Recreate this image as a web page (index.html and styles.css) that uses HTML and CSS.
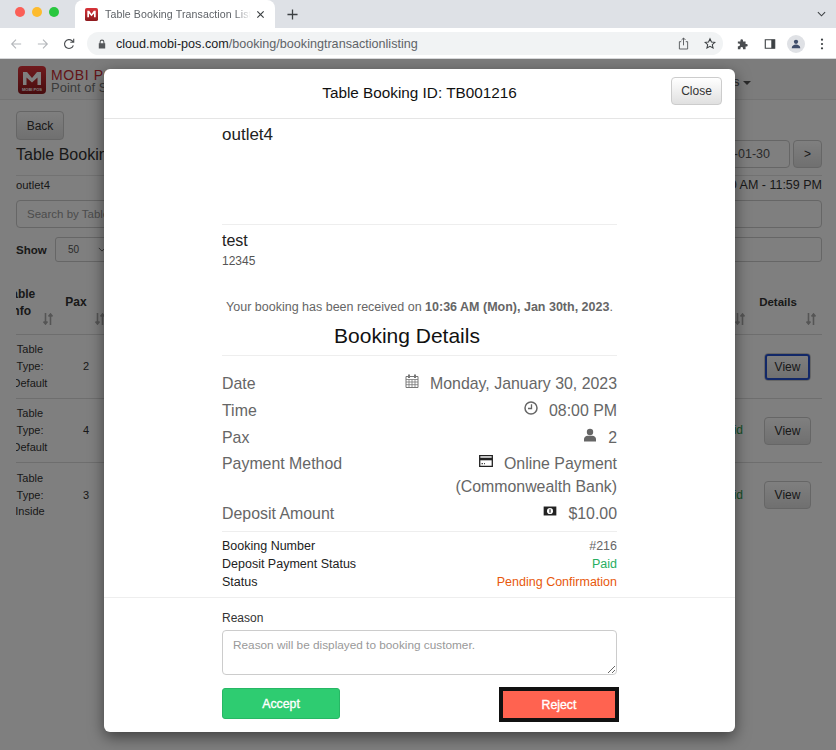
FILE: index.html
```html
<!DOCTYPE html>
<html lang="en">
<head>
<meta charset="utf-8">
<title>Table Booking Transaction Listing</title>
<link rel="stylesheet" href="styles.css">
</head>
<body>
<div class="tabstrip">
  <div class="lights"><i class="red"></i><i class="yellow"></i><i class="green"></i></div>
  <div class="tab">
    <svg class="favicon" viewBox="0 0 14 14"><defs><linearGradient id="fav" x1="0" y1="0" x2="0" y2="1"><stop offset="0" stop-color="#d8343a"/><stop offset="1" stop-color="#8d1a1e"/></linearGradient></defs><rect width="14" height="14" rx="2" fill="url(#fav)"/><path d="M2.500 10V3h2L7 6.500 9.500 3h2v7H9.700V6L7 9 4.300 6v4z" fill="#fff"/></svg>
    <span class="tabtitle">Table Booking Transaction Listi</span>
    <svg class="tabx" viewBox="0 0 10 10"><path d="M1.500 1.500l7 7M8.500 1.500l-7 7" stroke="#3c4043" stroke-width="1.300" fill="none"/></svg>
  </div>
  <svg class="plus" viewBox="0 0 12 12"><path d="M6 .5v11M.5 6h11" stroke="#3c4043" stroke-width="1.400" fill="none"/></svg>
  <svg class="chev" viewBox="0 0 10 6"><path d="M1 1l4 4 4-4" stroke="#3c4043" stroke-width="1.200" fill="none"/></svg>
</div>
<div class="toolbar">
  <div class="navs">
    <svg class="navicon" viewBox="0 0 14 14"><path d="M13 7H2M7 2L2 7l5 5" stroke="#b4b7bb" stroke-width="1.300" fill="none"/></svg>
    <svg class="navicon" viewBox="0 0 14 14"><path d="M1 7h11M7 2l5 5-5 5" stroke="#b4b7bb" stroke-width="1.300" fill="none"/></svg>
    <svg class="navicon" viewBox="0 0 14 14"><path d="M12 8.500A5.200 5.200 0 1 1 10.500 3.200L12.500 5M12.500 1V5H8.500" stroke="#4a4d50" stroke-width="1.300" fill="none"/></svg>
  </div>
  <div class="omnibox">
    <svg class="lock" viewBox="0 0 10 12"><path d="M2 5V3.500a3 3 0 0 1 6 0V5h1v6.500H1V5zm1.300 0h3.400V3.500a1.700 1.700 0 0 0-3.400 0z" fill="#55585b"/></svg>
    <span class="url"><b>cloud.mobi-pos.com</b>/booking/bookingtransactionlisting</span>
    <svg class="omniicon" viewBox="0 0 12 14"><path d="M3.500 5H1.500v8h9V5H8.500M6 9V1M3.800 3.200L6 1l2.200 2.200" stroke="#55585b" fill="none"/></svg>
    <svg class="omniicon star" viewBox="0 0 14 14"><path d="M7 1.500l1.700 3.700 4 .4-3 2.700.9 4L7 10.300l-3.600 2 .9-4-3-2.700 4-.4z" stroke="#3c4043" stroke-width="1.200" fill="none"/></svg>
  </div>
  <svg class="tool puzzle" viewBox="0 0 14 14"><path d="M1 4h3V3a1.500 1.500 0 0 1 3 0v1h3v3h1a1.500 1.500 0 0 1 0 3h-1v3H7v-1a1.500 1.500 0 0 0-3 0v1H1v-3.500h1a1.500 1.500 0 0 0 0-3H1z" fill="#4a4d50"/></svg>
  <svg class="tool panel" viewBox="0 0 14 14"><path d="M1.500 2h11v10h-11z" fill="none" stroke="#3c4043" stroke-width="1.300"/><path d="M8.500 2h4v10h-4z" fill="#3c4043"/></svg>
  <div class="avatar"><svg viewBox="0 0 14 14"><circle cx="7" cy="4.500" r="2.500" fill="#3f4d6b"/><path d="M2 12c0-3 2.500-4.300 5-4.300s5 1.300 5 4.300z" fill="#3f4d6b"/></svg></div>
  <svg class="dots" viewBox="0 0 4 14"><circle cx="2" cy="2" r="1.300" fill="#3c4043"/><circle cx="2" cy="7" r="1.300" fill="#3c4043"/><circle cx="2" cy="12" r="1.300" fill="#3c4043"/></svg>
</div>

<div class="viewport">
  <div class="page">
    <header class="sitebar">
      <svg class="sitelogo" viewBox="0 0 28 28"><defs><linearGradient id="logo" x1="0" y1="0" x2="0" y2="1"><stop offset="0" stop-color="#e0343a"/><stop offset="1" stop-color="#8f1a1e"/></linearGradient></defs><rect width="28" height="28" rx="4" fill="url(#logo)"/><path d="M5 19V6h4l5 6 5-6h4v13h-3.500v-7.500L14 16.500 8.500 11.500V19z" fill="#fff"/><text class="logotext" x="14" y="24.500" text-anchor="middle">MOBI POS</text></svg>
      <div class="brand"><div class="brand1">MOBI POS</div><div class="brand2">Point of Sale</div></div>
      <div class="sitemenu">Bookings <span class="caret"></span></div>
    </header>
    <main class="content">
      <button class="btn backbtn">Back</button>
      <div class="titlerow">
        <h2 class="pagetitle">Table Booking</h2>
        <div class="daterow"><span class="datebox">2023-01-30</span><button class="btn nextbtn">&gt;</button></div>
      </div>
      <div class="outletrow"><span>outlet4</span><span class="hours">12:00 AM - 11:59 PM</span></div>
      <div class="searchbox">Search by Table</div>
      <div class="filterrow">
        <b class="showlabel">Show</b>
        <span class="showsel">50<svg class="selchev" viewBox="0 0 10 6"><path d="M1 1l4 4 4-4" stroke="#555" stroke-width="1.100" fill="none"/></svg></span>
        <span class="filterbox"></span>
      </div>
      <div class="tablewrap">
        <div class="tableinner">
          <div class="tbl headrow">
            <div class="c1 th">Table<br>Info<svg class="sort sort1" viewBox="0 0 10 12"><path d="M2.500 0v11M0.500 8.500l2 2.500 2-2.500M7.500 12V1M5.500 3.500l2-2.500 2 2.500" stroke="#aaa" stroke-width="1.600" fill="none"/></svg></div>
            <div class="c2 th">Pax<svg class="sort sort2" viewBox="0 0 10 12"><path d="M2.500 0v11M0.500 8.500l2 2.500 2-2.500M7.500 12V1M5.500 3.500l2-2.500 2 2.500" stroke="#aaa" stroke-width="1.600" fill="none"/></svg></div>
            <div class="cm th"><svg class="sort sortm" viewBox="0 0 10 12"><path d="M2.500 0v11M0.500 8.500l2 2.500 2-2.500M7.500 12V1M5.500 3.500l2-2.500 2 2.500" stroke="#aaa" stroke-width="1.600" fill="none"/></svg></div>
            <div class="c3 th">Details<svg class="sort sort3" viewBox="0 0 10 12"><path d="M2.500 0v11M0.500 8.500l2 2.500 2-2.500M7.500 12V1M5.500 3.500l2-2.500 2 2.500" stroke="#aaa" stroke-width="1.600" fill="none"/></svg></div>
          </div>
          <div class="tbl datarow">
            <div class="c1">Table<br>Type:<br>Default</div><div class="c2">2</div><div class="cm"></div><div class="c3"><button class="btn viewbtn focus">View</button></div>
          </div>
          <div class="tbl datarow">
            <div class="c1">Table<br>Type:<br>Default</div><div class="c2">4</div><div class="cm stat">Paid</div><div class="c3"><button class="btn viewbtn">View</button></div>
          </div>
          <div class="tbl datarow lastrow">
            <div class="c1">Table<br>Type:<br>Inside</div><div class="c2">3</div><div class="cm stat">Paid</div><div class="c3"><button class="btn viewbtn">View</button></div>
          </div>
        </div>
      </div>
    </main>
  </div>
  <div class="overlay"></div>
  <section class="modal">
    <div class="modalhead">
      <h3 class="modaltitle">Table Booking ID: TB001216</h3>
      <button class="btn closebtn">Close</button>
    </div>
    <div class="modalbody">
      <div class="column">
        <div class="outletname">outlet4</div>
        <hr class="rule">
        <div class="custname">test</div>
        <div class="custphone">12345</div>
        <p class="received">Your booking has been received on <b>10:36 AM (Mon), Jan 30th, 2023</b>.</p>
        <h4 class="detailstitle">Booking Details</h4>
        <hr class="rule">
        <div class="detail first"><span>Date</span><span class="val"><svg class="ic" viewBox="0 0 14 14"><path d="M1 2.500h12V13.500H1z" fill="none" stroke="#777" stroke-width="1"/><path d="M1 5.500h12M1 8h12M1 10.700h12M4 5.500v8M7 5.500v8M10 5.500v8" stroke="#777" stroke-width=".8"/><path d="M3 .5h2v3.500H3zM9 .5h2v3.500H9z" fill="#777"/></svg>Monday, January 30, 2023</span></div>
        <div class="detail"><span>Time</span><span class="val"><svg class="ic" viewBox="0 0 14 14"><circle cx="7" cy="7" r="6" fill="none" stroke="#666" stroke-width="1.500"/><path d="M7.500 3.300v4.200H4" stroke="#666" stroke-width="1.300" fill="none"/></svg>08:00 PM</span></div>
        <div class="detail"><span>Pax</span><span class="val"><svg class="ic" viewBox="0 0 14 14"><circle cx="7" cy="4" r="3.200" fill="#666"/><path d="M1 13.500v-2.500c0-2 1.800-3.300 3.600-3.300h4.800c1.800 0 3.600 1.300 3.600 3.300v2.500z" fill="#666"/></svg>2</span></div>
        <div class="detail"><span>Payment Method</span><span class="val"><svg class="ic" viewBox="0 0 14 12"><path d="M.7.700h12.600v10.600H.7z" fill="none" stroke="#222" stroke-width="1.300"/><path d="M.7 2.700h12.600v2.600H.7z" fill="#222"/><path d="M2.500 8.700h1.500M5 8.700h1" stroke="#222"/></svg>Online Payment<br>(Commonwealth Bank)</span></div>
        <div class="detail last"><span>Deposit Amount</span><span class="val"><svg class="ic" viewBox="0 0 15 11"><path d="M.7.700h13.600v9.600H.7z" fill="#222"/><circle cx="7.500" cy="5.500" r="3.300" fill="#fff"/><path d="M7.500 3.500v4" stroke="#222" stroke-width="1.200"/></svg>$10.00</span></div>
        <hr class="rule">
        <div class="meta"><span>Booking Number</span><span class="grey">#216</span></div>
        <div class="meta"><span>Deposit Payment Status</span><span class="paid">Paid</span></div>
        <div class="meta"><span>Status</span><span class="pending">Pending Confirmation</span></div>
      </div>
    </div>
    <div class="modalfoot">
      <div class="column">
        <label class="reasonlabel" for="reason">Reason</label>
        <textarea id="reason" class="reason" placeholder="Reason will be displayed to booking customer."></textarea>
        <div class="actions">
          <button class="action accept">Accept</button>
          <button class="action reject">Reject</button>
        </div>
      </div>
    </div>
  </section>
</div>
</body>
</html>
```
FILE: styles.css
```css
* { box-sizing: border-box; }
html, body { margin: 0; padding: 0; }
body {
  width: 836px;
  height: 750px;
  overflow: hidden;
  font-family: "Liberation Sans", Arial, sans-serif;
  background: #fff;
  color: #333;
}
button { font-family: inherit; }
hr { margin: 0; border: 0; }

/* Browser chrome */
.tabstrip {
  height: 28px;
  background: #dee1e6;
  display: flex;
  align-items: flex-start;
}
.lights { display: flex; gap: 7px; padding: 7px 0 0 15px; width: 75px; }
.lights i { width: 10px; height: 10px; border-radius: 50%; display: block; }
.red { background: #fb5f57; }
.yellow { background: #fdbb2e; }
.green { background: #29c73f; }
.tab {
  width: 200px;
  height: 28px;
  background: #fff;
  border-radius: 8px 8px 0 0;
  display: flex;
  align-items: center;
  padding: 0 9px 0 10px;
}
.favicon { width: 13px; height: 13px; flex: none; }
.tabtitle {
  font-size: 10.600px;
  letter-spacing: .1px;
  color: #5f6368;
  margin-left: 7px;
  width: 146px;
  flex: none;
  white-space: nowrap;
  -webkit-mask-image: linear-gradient(to right, #000 130px, transparent 146px);
  mask-image: linear-gradient(to right, #000 130px, transparent 146px);
}
.tabx { width: 9px; height: 9px; margin-left: 5px; flex: none; }
.plus { width: 11px; height: 11px; margin: 9px 0 0 12px; }
.chev { width: 9px; height: 6px; margin: 11px 10px 0 auto; }
.toolbar {
  height: 31px;
  background: #fff;
  display: flex;
  align-items: center;
  padding: 1px 0 0 10px;
  border-bottom: 1px solid #d6d7d9;
}
.navs { display: flex; gap: 14.500px; width: 77px; flex: none; }
.navicon { width: 12px; height: 12px; flex: none; }
.omnibox {
  width: 636px;
  height: 23px;
  padding: 0 7px 0 11px;
  border-radius: 12px;
  background: #f1f3f4;
  display: flex;
  align-items: center;
  flex: none;
}
.lock { width: 8px; height: 10px; flex: none; }
.url { font-size: 12.600px; color: #5f6368; margin-left: 10px; white-space: nowrap; flex: 1; }
.url b { font-weight: normal; color: #202124; }
.omniicon { width: 11px; height: 13px; margin-left: 15px; flex: none; }
.omniicon.star { width: 12px; }
.tool { width: 12px; height: 12px; flex: none; }
.puzzle { margin-left: 14px; }
.panel { margin-left: 15px; }
.avatar {
  width: 18px;
  height: 18px;
  border-radius: 50%;
  background: #dfe1e5;
  margin-left: 11px;
  padding: 3px;
  flex: none;
}
.avatar svg { display: block; }
.dots { width: 4px; height: 12px; margin-left: 15px; flex: none; }

/* Page behind the dialog */
.viewport {
  position: relative;
  height: 691px;
  overflow: hidden;
}
.page { height: 691px; background: #fff; }
.sitebar {
  height: 41px;
  border-bottom: 1px solid #e7e7e7;
  background: #f8f8f8;
  padding: 7px 0 0 18px;
  display: flex;
  align-items: flex-start;
}
.sitelogo { width: 28px; height: 28px; flex: none; }
.logotext { font-size: 4px; font-weight: bold; fill: #fff; }
.brand { margin-left: 5px; padding-top: 2px; }
.brand1 { font-size: 14px; line-height: 14px; color: #c62a30; letter-spacing: .6px; }
.brand2 { font-size: 13px; line-height: 11px; color: #777; }
.sitemenu { margin-left: auto; margin-right: 85px; margin-top: 8px; font-size: 13px; color: #555; }
.caret {
  display: inline-block;
  border-top: 4px solid #555;
  border-left: 4px solid transparent;
  border-right: 4px solid transparent;
  vertical-align: middle;
}
.content { padding: 11px 14px 0 16px; }
.btn {
  background: linear-gradient(#fff, #e0e0e0);
  border: 1px solid #ccc;
  border-radius: 4px;
  font-size: 12px;
  color: #333;
  padding: 0;
  display: block;
}
.backbtn { width: 48px; height: 29px; }
.titlerow { display: flex; justify-content: space-between; align-items: flex-start; height: 35px; }
.pagetitle { margin: 6px 0 0; font-size: 16px; line-height: 18px; font-weight: normal; color: #333; }
.daterow { display: flex; gap: 3px; }
.datebox {
  display: block;
  width: 120px;
  height: 28px;
  border: 1px solid #ccc;
  border-radius: 4px;
  font-size: 12.500px;
  line-height: 26px;
  text-align: right;
  padding-right: 19px;
  color: #555;
}
.nextbtn { width: 29px; height: 28px; }
.outletrow {
  display: flex;
  justify-content: space-between;
  border-top: 1px solid #e5e5e5;
  padding-top: 2px;
  height: 25px;
  font-size: 11.300px;
  line-height: 15px;
}
.hours { font-size: 12.500px; }
.searchbox {
  height: 28px;
  border: 1px solid #ccc;
  border-radius: 4px;
  font-size: 11.500px;
  line-height: 26px;
  padding-left: 10px;
  color: #999;
}
.filterrow { display: flex; align-items: center; margin-top: 9px; height: 25px; }
.showlabel { font-size: 11.500px; width: 39px; }
.showsel {
  display: block;
  width: 100px;
  height: 25px;
  border: 1px solid #ccc;
  border-radius: 3px;
  font-size: 10px;
  line-height: 23px;
  padding-left: 12px;
  color: #555;
}
.selchev { width: 8px; height: 5px; margin-left: 19px; vertical-align: 1px; }
.filterbox { flex: 1; height: 25px; border: 1px solid #ccc; border-radius: 3px; margin-left: 100px; }
.tablewrap { margin-top: 24px; overflow: hidden; }
.tableinner { margin-left: -12px; }
.tbl { display: flex; font-size: 11px; line-height: 16.700px; }
.c1 { width: 52px; text-align: center; }
.c2 { width: 60px; text-align: center; }
.cm { flex: 1; text-align: right; padding-right: 9px; font-size: 12px; }
.c3 { width: 70px; }
.stat { color: #2b9d4b; }
.headrow { height: 49px; border-bottom: 1px solid #ddd; font-size: 12px; line-height: 17px; }
.th {
  font-weight: bold;
  position: relative;
  height: 48px;
  padding: 0 20px 16px 0;
  display: block;
}
.c1.th { padding-top: 0; }
.c2.th { padding-top: 8px; }
.c3.th { padding: 8px 18px 16px 0; text-align: center; font-size: 11.500px; }
.sort { position: absolute; bottom: 9px; width: 10px; height: 12px; }
.sort1 { right: 3px; }
.sort2 { right: 11px; }
.sortm { right: 7px; }
.sort3 { right: 6px; }
.datarow { height: 64px; border-bottom: 1px solid #ddd; align-items: center; }
.lastrow { border-bottom: 0; }
.viewbtn { width: 47px; height: 28px; margin-left: 12px; }
.viewbtn.focus { outline: 2px solid #2450d0; outline-offset: -3px; }
.overlay { position: absolute; inset: 0; background: rgba(0, 0, 0, .5); }

/* Dialog */
.modal {
  position: absolute;
  left: 104px;
  top: 10px;
  width: 631px;
  height: 663px;
  background: #fff;
  border-radius: 6px;
  box-shadow: 0 5px 15px rgba(0, 0, 0, .5);
  display: flex;
  flex-direction: column;
}
.modalhead {
  height: 50px;
  flex: none;
  border-bottom: 1px solid #e5e5e5;
  display: flex;
  align-items: center;
  justify-content: center;
  position: relative;
}
.modaltitle { margin: 0 0 2px; font-size: 15.300px; font-weight: normal; color: #111; }
.closebtn {
  position: absolute;
  right: 13px;
  top: 8px;
  width: 51px;
  height: 28px;
}
.modalbody {
  height: 479px;
  flex: none;
  border-bottom: 1px solid #eee;
  overflow: hidden;
}
.column { width: 395px; margin-left: 118px; }
.outletname { font-size: 17px; line-height: 18px; padding-top: 7px; height: 105px; color: #222; }
.rule { height: 1px; background: #eee; }
.custname { font-size: 16px; line-height: 18px; margin-top: 7px; color: #222; }
.custphone { font-size: 12px; line-height: 14px; margin-top: 4px; color: #555; }
.received { margin: 31px 0 0; font-size: 12.500px; line-height: 16px; color: #666; text-align: center; white-space: nowrap; }
.detailstitle { margin: 9px 25px 0 0; font-size: 21px; font-weight: normal; line-height: 24px; color: #111; text-align: center; height: 31px; }
.detail { display: flex; justify-content: space-between; font-size: 15.900px; line-height: 23px; color: #666; margin-top: 3.800px; }
.detail.first { margin-top: 16px; }
.detail.last { margin-top: 3.500px; margin-bottom: 6.500px; }
.val { text-align: right; }
.ic { width: 14px; height: 14px; margin-right: 11px; vertical-align: 1px; display: inline-block; }
.meta { display: flex; justify-content: space-between; font-size: 12.500px; line-height: 18px; color: #222; }
.rule + .meta { margin-top: 5px; }
.grey { color: #666; }
.paid { color: #27ae60; }
.pending { color: #e8590c; }
.modalfoot { flex: 1; padding-top: 13px; }
.reasonlabel { display: block; font-size: 12px; line-height: 15px; color: #333; }
.reason {
  display: block;
  width: 395px;
  height: 45px;
  margin-top: 4px;
  padding: 6px 10px;
  border: 1px solid #ccc;
  border-radius: 4px;
  font-family: inherit;
  font-size: 11.800px;
  line-height: 16px;
}
.reason::placeholder { color: #999; }
.actions { display: flex; justify-content: space-between; margin-top: 13px; }
.action { width: 118px; height: 31px; border-radius: 3px; font-size: 12.300px; color: #fff; padding: 0; -webkit-text-stroke: .35px #fff; }
.accept { background: #2ecc71; border: 1px solid #27b765; }
.reject { background: #ff6350; border: 4px solid #111; width: 120px; height: 35px; margin: -1px -2px 0 0; border-radius: 0; }
```
